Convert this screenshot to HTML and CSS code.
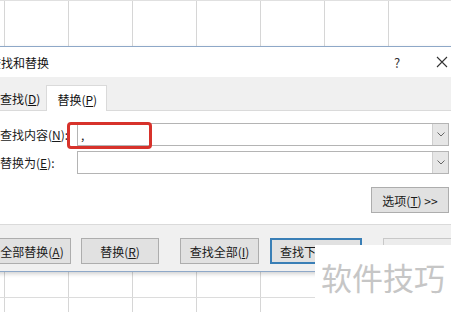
FILE: index.html
```html
<!DOCTYPE html>
<html lang="zh-CN">
<head>
    <meta charset="UTF-8">
    <title>查找和替换</title>
    <link rel="stylesheet" href="styles.css">
</head>
<body>
    <div class="sheet sheet-top"></div>

    <div class="dialog">
        <div class="titlebar">
            <span class="title">查找和替换</span>
            <span class="help">?</span>
            <span class="close">
                <svg width="12" height="12" viewBox="0 0 12 12"><path d="M1 1 L11 11 M11 1 L1 11" stroke="#333" stroke-width="1.1" fill="none"/></svg>
            </span>
        </div>

        <div class="tabs">
            <div class="tab">查找(<u>D</u>)</div>
            <div class="tab active">替换(<u>P</u>)</div>
        </div>

        <div class="panel">
            <div class="row">
                <label for="findWhat">查找内容(<u>N</u>):</label>
                <div class="combo">
                    <span class="value" id="findWhat">,</span>
                    <span class="drop"><svg width="8" height="5" viewBox="0 0 8 5"><path d="M0.5 0.5 L4 4 L7.5 0.5" stroke="#666" fill="none"/></svg></span>
                </div>
            </div>
            <div class="row">
                <label for="replaceWith">替换为(<u>E</u>):</label>
                <div class="combo">
                    <span class="value" id="replaceWith"></span>
                    <span class="drop"><svg width="8" height="5" viewBox="0 0 8 5"><path d="M0.5 0.5 L4 4 L7.5 0.5" stroke="#666" fill="none"/></svg></span>
                </div>
            </div>
            <div class="options">
                <button class="btn">选项(<u>T</u>) &gt;&gt;</button>
            </div>
        </div>

        <div class="actions">
            <button class="btn">全部替换(<u>A</u>)</button>
            <button class="btn">替换(<u>R</u>)</button>
            <button class="btn group">查找全部(<u>I</u>)</button>
            <button class="btn default">查找下一个(<u>F</u>)</button>
            <button class="btn group disabled">关闭</button>
        </div>
    </div>

    <div class="sheet sheet-bottom"></div>

    <div class="highlight"></div>
    <div class="watermark">软件技巧</div>
</body>
</html>
```

FILE: styles.css
```css
body {
    margin: 0;
    width: 451px;
    height: 312px;
    overflow: hidden;
    position: relative;
    font-family: "Noto Sans CJK SC", "Microsoft YaHei", sans-serif;
    font-size: 12px;
    color: #1a1a1a;
    background: #fff;
}
.sheet {
    background-color: #fff;
    background-image: linear-gradient(to right, #d6d6d6 1px, transparent 1px);
    background-size: 64px 100%;
    background-position: 4px 0;
}
.sheet-top {
    height: 46px;
    border-top: 1px solid #e0e0e0;
    box-sizing: border-box;
}
.sheet-bottom {
    height: 40px;
    background-image:
        linear-gradient(to bottom, transparent 25px, #dcdcdc 25px, #dcdcdc 26px, transparent 26px),
        linear-gradient(to right, #d6d6d6 1px, transparent 1px);
    background-size: 100% 100%, 64px 100%;
    background-position: 0 0, 4px 0;
}

/* окно диалога */
.dialog {
    width: 480px;
    margin-left: -14px;
    border-top: 1px solid #8ea8c8;
    border-bottom: 1px solid #8ea8c8;
    background: #f0f0f0;
    box-shadow: 0 2px 4px rgba(0, 0, 0, 0.18);
    position: relative;
}
.titlebar {
    height: 30px;
    background: #fff;
    display: flex;
    align-items: center;
    padding: 0 9px 0 3px;
}
.title {
    flex: 1;
    font-size: 12px;
    color: #111;
    padding-top: 1px;
}
.help, .close {
    width: 30px;
    text-align: center;
    display: flex;
    justify-content: center;
    align-items: center;
}
.help {
    font-size: 13px;
    color: #333;
    margin-right: 15px;
}

.tabs {
    height: 33px;
    display: flex;
    align-items: flex-end;
    padding-left: 6px;
    box-sizing: border-box;
}
.tab {
    height: 22px;
    line-height: 21px;
    padding: 0 8px;
    color: #111;
}
.tab.active {
    height: 26px;
    line-height: 28px;
    padding: 0 9px 0 10px;
    margin-left: -2px;
    margin-bottom: -1px;
    background: #fff;
    border: 1px solid #dadada;
    border-bottom: none;
    box-sizing: border-box;
    position: relative;
}

.panel {
    background: #fff;
    border-top: 1px solid #dadada;
    border-bottom: 1px solid #dadada;
    padding: 12px 17px 11px 14px;
}
.row {
    display: flex;
    align-items: center;
    height: 23px;
    margin-bottom: 5px;
}
.row label {
    width: 77px;
    flex-shrink: 0;
}
.combo {
    flex: 1;
    height: 23px;
    box-sizing: border-box;
    border: 1px solid #b4b4b4;
    background: #fff;
    display: flex;
}
.value {
    flex: 1;
    padding: 2px 0 0 3px;
    line-height: 18px;
}
.drop {
    width: 15px;
    background: #e6e6e6;
    border-left: 1px solid #cfcfcf;
    display: flex;
    align-items: center;
    justify-content: center;
}
.options {
    display: flex;
    justify-content: flex-end;
    margin-top: 13px;
}

.btn {
    font-family: inherit;
    font-size: 12px;
    color: #1a1a1a;
    height: 26px;
    width: 78px;
    padding: 0;
    background: #e1e1e1;
    border: 1px solid #adadad;
    box-sizing: border-box;
}
.actions {
    height: 46px;
    box-sizing: border-box;
    padding: 13px 0 0 7px;
    display: flex;
    align-items: flex-start;
}
.actions .btn {
    margin-left: 10px;
}
.actions .btn:first-child {
    margin-left: 0;
}
.actions .btn.group {
    margin-left: 21px;
    width: 79px;
}
.actions .btn.default {
    width: 92px;
    margin-left: 11px;
    border: 2px solid #3a7fb6;
    text-align: left;
    padding-left: 8px;
}
.actions .btn.disabled {
    color: #a8a8a8;
    background: #ececec;
    border-color: #c8c8c8;
}

/* пометки поверх скриншота */
.highlight {
    position: absolute;
    left: 67px;
    top: 122px;
    width: 85px;
    height: 27px;
    box-sizing: border-box;
    border: 3px solid #d7322b;
    border-radius: 4px;
}
.watermark {
    position: absolute;
    left: 315px;
    top: 245px;
    width: 136px;
    height: 67px;
    background: #fff;
    color: #c6c6c6;
    font-size: 31px;
    line-height: 64px;
    padding-left: 6px;
    box-sizing: border-box;
    white-space: nowrap;
}
```
